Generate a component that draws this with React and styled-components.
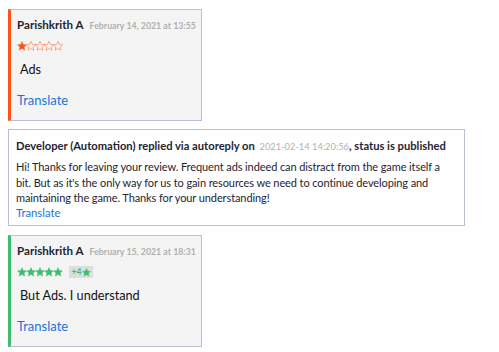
import styled, { createGlobalStyle } from 'styled-components'

const Global = createGlobalStyle`
  body {
    margin: 8px;
    background: #fff;
    font-family: Lato, "Open Sans", sans-serif;
    color: #1d1d1d;
  }
`;

const reviews = [
  {
    id: 1,
    author: 'Parishkrith A',
    date: 'February 14, 2021 at 13:55',
    rating: 1,
    text: 'Ads',
    reply: {
      who: 'Developer (Automation) replied via autoreply on',
      at: '2021-02-14 14:20:56',
      status: ', status is published',
      text: "Hi! Thanks for leaving your review. Frequent ads indeed can distract from the game itself a bit. But as it's the only way for us to gain resources we need to continue developing and maintaining the game. Thanks for your understanding!"
    }
  },
  {
    id: 2,
    author: 'Parishkrith A',
    date: 'February 15, 2021 at 18:31',
    rating: 5,
    change: '+4',
    text: 'But Ads. I understand'
  }
];

const colorFor = rating => rating >= 4 ? '#3dbd6f' : '#ff5419';

const STAR = 'M5 0.4 L6.35 3.4 L9.6 3.75 L7.15 5.95 L7.85 9.2 L5 7.55 L2.15 9.2 L2.85 5.95 L0.4 3.75 L3.65 3.4 Z';

const StarIcon = ({ color, empty, size = 10 }) => (
  <svg width={size} height={size} viewBox="0 0 10 10">
    <path
      d={STAR}
      fill={empty ? 'none' : color}
      stroke={color}
      strokeWidth={empty ? 0.7 : 0.3}
      strokeLinejoin="round"
      opacity={empty ? 0.65 : 1}
    />
  </svg>
);

const Stars = ({ rating }) => {
  const color = colorFor(rating);
  return (
    <StarRow>
      {[1, 2, 3, 4, 5].map(n => (
        <StarIcon key={n} color={color} empty={n > rating} />
      ))}
    </StarRow>
  );
};

export default function App() {
  return (
    <>
      <Global />
      <Feed>
        {reviews.map(r => (
          <Group key={r.id}>
            <Card accent={colorFor(r.rating)}>
              <Head>
                <Author>{r.author}</Author>
                <Date>{r.date}</Date>
              </Head>
              <RatingLine>
                <Stars rating={r.rating} />
                {r.change && (
                  <Change>
                    {r.change}
                    <StarIcon color="#3dbd6f" size={9} />
                  </Change>
                )}
              </RatingLine>
              <Body>{r.text}</Body>
              <Link>Translate</Link>
            </Card>
            {r.reply && (
              <Reply>
                <ReplyHead>
                  {r.reply.who} <Stamp>{r.reply.at}</Stamp>{r.reply.status}
                </ReplyHead>
                <ReplyText>{r.reply.text}</ReplyText>
                <SmallLink>Translate</SmallLink>
              </Reply>
            )}
          </Group>
        ))}
      </Feed>
    </>
  );
}

const Feed = styled.div`
  display: flex;
  flex-direction: column;
  gap: 9px;
  padding-top: 1px;
`;

const Group = styled.div`
  display: flex;
  flex-direction: column;
  gap: 8px;
`;

const Card = styled.div`
  width: 194px;
  box-sizing: border-box;
  height: 112px;
  background: #f4f4f4;
  border: 1px solid #b7c0d5;
  border-left: 3px solid ${p => p.accent};
  padding: 8px 8px 0 6px;
  display: flex;
  flex-direction: column;
`;

const Head = styled.div`
  display: flex;
  align-items: baseline;
  gap: 6px;
  white-space: nowrap;
`;

const Author = styled.span`
  font-weight: 700;
  font-size: 11.6px;
  color: #1e2530;
`;

const Date = styled.span`
  font-weight: 700;
  font-size: 8.8px;
  color: #b0b0b0;
`;

const RatingLine = styled.div`
  display: flex;
  align-items: center;
  gap: 6px;
  margin-top: 8px;
  height: 14px;
`;

const StarRow = styled.span`
  display: flex;
  gap: 0;
  margin-left: -0.5px;
  svg { display: block; margin-right: -0.8px; }
`;

const Change = styled.span`
  display: flex;
  align-items: center;
  gap: 1px;
  height: 12px;
  background: #dedede;
  color: #3dbd6f;
  font-size: 8.5px;
  font-weight: 700;
  padding: 0 2px 0 3px;
  svg { display: block; }
`;

const Body = styled.div`
  font-size: 12.7px;
  color: #111;
  margin-top: 8px;
  padding-left: 3px;
`;

const Link = styled.a`
  font-size: 13px;
  color: #1a74d8;
  margin-top: 15px;
  cursor: pointer;
`;

const Reply = styled.div`
  width: 457px;
  box-sizing: border-box;
  height: 97px;
  background: #fff;
  border: 1px solid #b7c0d5;
  padding: 9px 8px 0 7px;
`;

const ReplyHead = styled.div`
  font-weight: 700;
  font-size: 11.2px;
  color: #1e2530;
  white-space: nowrap;
`;

const Stamp = styled.span`
  font-weight: 400;
  font-size: 9.3px;
  color: #b0b0b0;
  margin-left: 2px;
`;

const ReplyText = styled.p`
  margin: 7px 0 0;
  font-size: 11px;
  letter-spacing: -0.1px;
  line-height: 15.5px;
  color: #1e2530;
`;

const SmallLink = styled.a`
  display: block;
  font-size: 11.3px;
  color: #1a74d8;
  line-height: 14px;
  cursor: pointer;
`;
